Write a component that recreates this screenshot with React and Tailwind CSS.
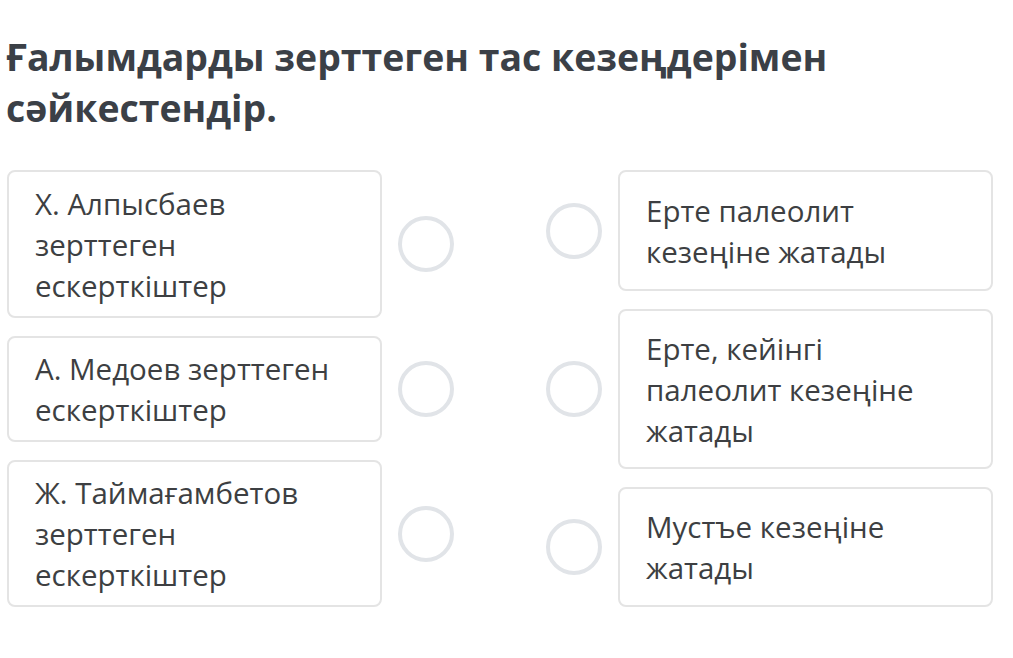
export default function App() {
  const left = [
    { text: "Х. Алпысбаев зерттеген ескерткіштер", h: "h-[148px]" },
    { text: "А. Медоев зерттеген ескерткіштер", h: "h-[106px]" },
    { text: "Ж. Таймағамбетов зерттеген ескерткіштер", h: "h-[147px]" },
  ];
  const right = [
    { text: "Ерте палеолит кезеңіне жатады", h: "h-[121px]" },
    { text: "Ерте, кейінгі палеолит кезеңіне жатады", h: "h-[160px]" },
    { text: "Мустъе кезеңіне жатады", h: "h-[120px]" },
  ];
  const Circle = () => (
    <div className="w-[56px] h-[56px] rounded-full border-[4px] border-[#e1e4e8] bg-white shrink-0" />
  );
  const cardCls =
    "w-[375px] shrink-0 border-2 border-[#e4e4e4] rounded-[8px] flex items-center pl-[26px] pr-[40px] text-[#3d3f42] text-[29.5px] leading-[41px]";
  return (
    <div className="w-[1013px] h-[658px] bg-white overflow-hidden" style={{ fontFamily: '"Open Sans", sans-serif' }}>
      <h1 className="pl-[6px] pt-[31px] text-[37.4px] leading-[51px] font-bold text-[#3b4047] w-[900px]">
        Ғалымдарды зерттеген тас кезеңдерімен сәйкестендір.
      </h1>
      <div className="flex pl-[7px] mt-[37px]">
        <div className="flex flex-col gap-[18px]">
          {left.map((c, i) => (
            <div key={i} className="flex items-center gap-[16px]">
              <div className={`${cardCls} ${c.h}`}>
                <div>{c.text}</div>
              </div>
              <Circle />
            </div>
          ))}
        </div>
        <div className="flex flex-col gap-[18px] ml-[92px]">
          {right.map((c, i) => (
            <div key={i} className="flex items-center gap-[16px]">
              <Circle />
              <div className={`${cardCls} ${c.h}`}>
                <div>{c.text}</div>
              </div>
            </div>
          ))}
        </div>
      </div>
    </div>
  );
}
